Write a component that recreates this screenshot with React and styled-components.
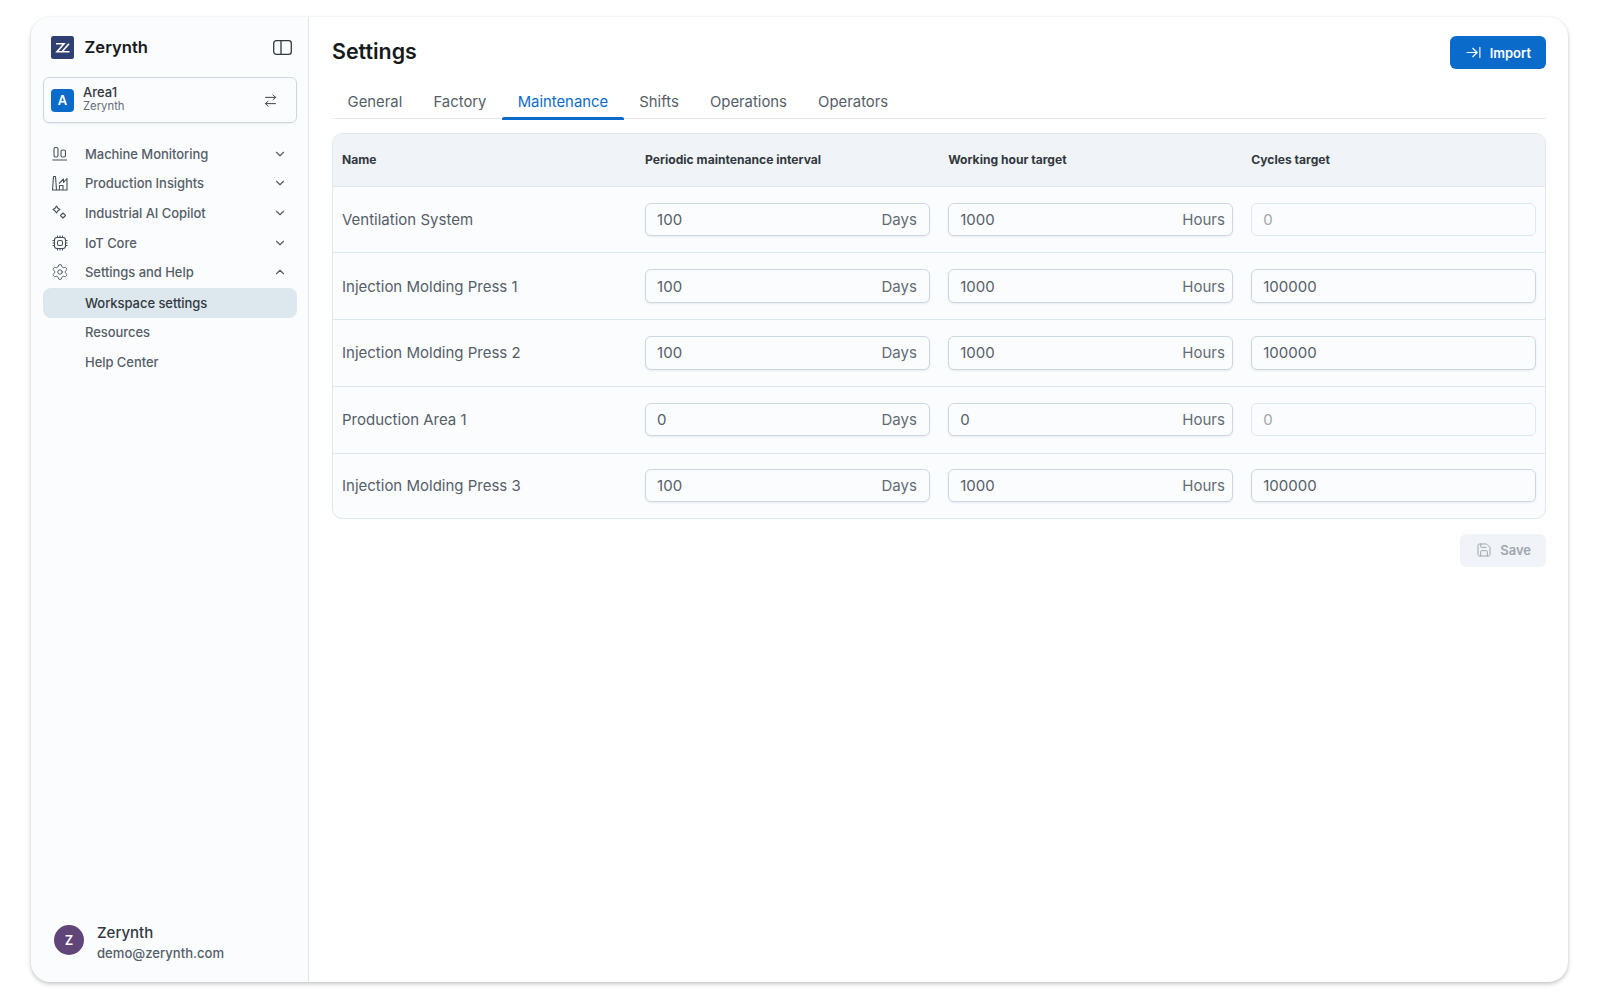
import React from 'react'
import styled, { createGlobalStyle } from 'styled-components'
import {
  ArrowRightLeft,
  ArrowRightToLine,
  ChevronDown,
  ChevronUp,
  Save,
  Settings as Gear,
} from 'lucide-react'

const GlobalStyle = createGlobalStyle`
  html, body {
    margin: 0;
    background: #fff;
    font-family: Inter, "Liberation Sans", sans-serif;
    -webkit-font-smoothing: antialiased;
  }
`

const Page = styled.div`
  box-sizing: border-box;
  width: 1600px;
  height: 1000px;
  padding: 17px 32px 17px 31px;
  overflow: hidden;
`

const Card = styled.div`
  display: flex;
  height: 965px;
  border-radius: 20px;
  background: #fff;
  box-shadow: 0 2px 4px rgba(21, 21, 21, 0.24), 0 0 2px rgba(21, 21, 21, 0.06);
  overflow: hidden;
`

const Sidebar = styled.aside`
  box-sizing: border-box;
  display: flex;
  flex-direction: column;
  flex: 0 0 278px;
  padding: 19px 11px 0 12px;
  background: #fbfcfe;
  border-right: 1px solid #dde7ee;
`

const Brand = styled.div`
  display: flex;
  align-items: center;
  height: 23px;
  margin-bottom: 18px;
  padding: 0 5px 0 8px;
  svg.panel {
    margin-left: auto;
    color: #32383e;
  }
`

const BrandName = styled.span`
  margin: -2px 0 0 10.5px;
  font-size: 16.6px;
  font-weight: 600;
  color: #171a1c;
`

const Switcher = styled.div`
  box-sizing: border-box;
  display: flex;
  align-items: center;
  height: 46px;
  padding: 0 18px 0 7px;
  border: 1px solid #cdd7e1;
  border-radius: 6px;
  background: #fbfcfe;
  box-shadow: 0 1px 2px rgba(21, 21, 21, 0.06);
  margin-bottom: 16px;
  svg {
    margin-left: auto;
    color: #32383e;
  }
`

const AreaBadge = styled.div`
  display: flex;
  align-items: center;
  justify-content: center;
  width: 23px;
  height: 23px;
  border-radius: 4px;
  background: #0b6bcb;
  color: #fff;
  font-size: 13px;
  font-weight: 600;
`

const AreaText = styled.div`
  display: flex;
  flex-direction: column;
  margin: -2px 0 0 9px;
  line-height: 14px;
`

const AreaName = styled.span`
  font-size: 13px;
  font-weight: 500;
  color: #32383e;
`

const AreaOrg = styled.span`
  font-size: 11.3px;
  color: #636b74;
`

const NavList = styled.nav`
  display: flex;
  flex-direction: column;
`

const SubList = styled.div`
  display: flex;
  flex-direction: column;
  margin-top: 1px;
`

const NavRow = styled.div`
  display: flex;
  align-items: center;
  box-sizing: border-box;
  height: 29.6px;
  padding: 0 10px;
  border-radius: 8px;
  font-size: 13px;
  letter-spacing: -0.05px;
  font-weight: 500;
  color: ${(p) => (p.$active ? '#32383e' : '#555e68')};
  background: ${(p) => (p.$active ? '#dde7ee' : 'transparent')};
`

const NavIcon = styled.span`
  display: flex;
  align-items: center;
  justify-content: center;
  flex: 0 0 16px;
  width: 16px;
  height: 16px;
  margin: 0 17px 0 -1px;
  color: #474f57;
  svg {
    flex-shrink: 0;
  }
`

const SubLabel = styled.span`
  margin-left: 32px;
`

const Chevron = styled.span`
  display: flex;
  margin-left: auto;
  color: #555e68;
`

const Account = styled.div`
  display: flex;
  align-items: center;
  margin-top: auto;
  padding: 0 0 20px 11px;
`

const Avatar = styled.div`
  display: flex;
  align-items: center;
  justify-content: center;
  width: 30px;
  height: 30px;
  border-radius: 50%;
  background: #5f4578;
  color: #fff;
  font-size: 13px;
  font-weight: 600;
`

const AccountText = styled.div`
  display: flex;
  flex-direction: column;
  gap: 2.500px;
  margin-left: 13px;
  padding-top: 6px;
`

const AccountName = styled.span`
  font-size: 15px;
  font-weight: 500;
  line-height: 18px;
  color: #32383e;
`

const AccountMail = styled.span`
  font-size: 13.1px;
  font-weight: 500;
  line-height: 18px;
  color: #555e68;
`

const Main = styled.main`
  flex: 1;
  min-width: 0;
  padding: 19px 22px 0 23px;
`

const TopBar = styled.div`
  display: flex;
  align-items: center;
  justify-content: space-between;
  height: 33px;
  margin-bottom: 14px;
`

const Title = styled.h1`
  margin: 0 0 4px;
  font-size: 21.4px;
  font-weight: 600;
  color: #171a1c;
`

const Button = styled.button`
  display: flex;
  align-items: center;
  gap: 8px;
  height: 33px;
  border: 0;
  border-radius: 6px;
  padding: 0 15px 0 ${(p) => (p.disabled ? '16px' : '15px')};
  font-family: inherit;
  font-size: 13px;
  font-weight: 600;
  color: ${(p) => (p.disabled ? '#9fa6ad' : '#fff')};
  background: ${(p) => (p.disabled ? '#f0f4f8' : '#0b6bcb')};
`

const Tabs = styled.div`
  display: flex;
  height: 35px;
  border-bottom: 1.5px solid #e4e9ee;
  margin-bottom: 14px;
`

const Tab = styled.div`
  position: relative;
  display: flex;
  align-items: center;
  padding: 2px 15.6px 0;
  font-size: 14.85px;
  color: ${(p) => (p.$active ? '#0b6bcb' : '#555e68')};
  &::after {
    content: '';
    display: ${(p) => (p.$active ? 'block' : 'none')};
    position: absolute;
    left: 0;
    right: 0;
    bottom: -1.5px;
    height: 2.5px;
    border-radius: 2px 2px 0 0;
    background: #0b6bcb;
  }
`

const Table = styled.div`
  border: 1px solid #dde7ee;
  border-radius: 10px;
  background: #fbfcfe;
  overflow: hidden;
`

const Row = styled.div`
  display: grid;
  grid-template-columns: repeat(4, 1fr);
  column-gap: 18.3px;
  align-items: center;
  padding: 0 9px;
  height: 65.75px;
  border-bottom: 1px solid #dde7ee;
  &:last-child {
    height: 64px;
    border-bottom: 0;
  }
`

const HeadRow = styled(Row)`
  height: 51.5px;
  background: #f0f4f8;
`

const HeadCell = styled.div`
  font-size: 12.1px;
  font-weight: 700;
  color: #32383e;
`

const NameCell = styled.div`
  font-size: 15px;
  color: #555e68;
`

const Field = styled.div`
  box-sizing: border-box;
  display: flex;
  align-items: center;
  justify-content: space-between;
  height: 33.5px;
  padding: 0 ${(p) => (p.$tight ? '7px' : '12px')} 0 11px;
  border: 1px solid ${(p) => (p.$disabled ? '#dde7ee' : '#cdd7e1')};
  border-radius: 6px;
  background: #fbfcfe;
  box-shadow: ${(p) => (p.$disabled ? 'none' : '0 1px 2px rgba(21, 21, 21, 0.08)')};
  font-size: 15px;
  color: ${(p) => (p.$disabled ? '#9fa6ad' : '#555e68')};
`

const Unit = styled.span`
  color: #636b74;
`

const Actions = styled.div`
  display: flex;
  justify-content: flex-end;
  margin-top: 15px;
`

const PanelIcon = () => (
  <svg className="panel" width="19" height="15" viewBox="0 0 19 15" fill="none" stroke="currentColor" strokeWidth="1.3">
    <rect x="0.7" y="0.7" width="17.6" height="13.6" rx="2.600" />
    <path d="M8 0.7v13.6" />
  </svg>
)

const MachineIcon = () => (
  <svg width="16" height="16" viewBox="0 0 16 16" fill="none" stroke="currentColor" strokeWidth="1.1">
    <rect x="2" y="1.5" width="4" height="9.5" rx="1.6" />
    <rect x="9" y="4" width="4.500" height="7" rx="1.6" />
    <path d="M0.5 14h14.500" />
  </svg>
)

const FactoryIcon = () => (
  <svg width="18" height="16" viewBox="0 0 18 16" fill="none" stroke="currentColor" strokeWidth="1.1" strokeLinejoin="round">
    <path d="M1.500 15 2.500 1.500h2L5.500 15z" />
    <path d="M5.500 15h10.500V3.500l-3.500 4V4L8 8.500" />
    <path d="M8.500 15v-4.500h3.500V15" />
  </svg>
)

const SparkIcon = () => (
  <svg width="16" height="16" viewBox="0 0 16 16" fill="none" stroke="currentColor" strokeWidth="1.1" strokeLinejoin="round">
    <path d="M4.500 1Q5.500 3.500 8 4.500 5.500 5.500 4.500 8 3.500 5.500 1 4.500 3.500 3.500 4.500 1z" />
    <path d="M11 8 13.500 10.500 11 13 8.500 10.500z" />
  </svg>
)

const ChipIcon = () => (
  <svg width="16" height="16" viewBox="0 0 16 16" fill="none" stroke="currentColor" strokeWidth="1.1">
    <rect x="2.500" y="2.500" width="11" height="11" rx="2.500" />
    <rect x="5.500" y="5.500" width="5" height="5" rx="1.800" />
    <path d="M5.500 0.500v2M8 0.500v2M10.500 0.500v2M5.500 13.500v2M8 13.500v2M10.500 13.500v2M0.500 5.500h2M0.500 8h2M0.500 10.500h2M13.500 5.500h2M13.500 8h2M13.500 10.500h2" />
  </svg>
)

const BrandLogo = () => (
  <svg width="23" height="23" viewBox="0 0 23 23">
    <rect width="23" height="23" rx="2.500" fill="#2f3f73" />
    <path d="M5 7.700h8L6 15.700h4.500M18 7.700l-7 8h7.500" fill="none" stroke="#fff" strokeWidth="1.600" />
  </svg>
)

const navItems = [
  { label: 'Machine Monitoring', icon: <MachineIcon /> },
  { label: 'Production Insights', icon: <FactoryIcon /> },
  { label: 'Industrial AI Copilot', icon: <SparkIcon /> },
  { label: 'IoT Core', icon: <ChipIcon /> },
  { label: 'Settings and Help', icon: <Gear size={18} strokeWidth={1.2} />, open: true },
]

const subItems = [
  { label: 'Workspace settings', active: true },
  { label: 'Resources' },
  { label: 'Help Center' },
]

const tabs = ['General', 'Factory', 'Maintenance', 'Shifts', 'Operations', 'Operators']

const rows = [
  { name: 'Ventilation System', interval: '100', hours: '1000', cycles: '0', noCycles: true },
  { name: 'Injection Molding Press 1', interval: '100', hours: '1000', cycles: '100000' },
  { name: 'Injection Molding Press 2', interval: '100', hours: '1000', cycles: '100000' },
  { name: 'Production Area 1', interval: '0', hours: '0', cycles: '0', noCycles: true },
  { name: 'Injection Molding Press 3', interval: '100', hours: '1000', cycles: '100000' },
]

const App = () => (
  <Page>
    <GlobalStyle />
    <Card>
      <Sidebar>
        <Brand>
          <BrandLogo />
          <BrandName>Zerynth</BrandName>
          <PanelIcon />
        </Brand>
        <Switcher>
          <AreaBadge>A</AreaBadge>
          <AreaText>
            <AreaName>Area1</AreaName>
            <AreaOrg>Zerynth</AreaOrg>
          </AreaText>
          <ArrowRightLeft size={15} strokeWidth={1.5} />
        </Switcher>
        <NavList>
          {navItems.map((item) => (
            <NavRow key={item.label}>
              <NavIcon>{item.icon}</NavIcon>
              {item.label}
              <Chevron>
                {item.open ? <ChevronUp size={14} /> : <ChevronDown size={14} />}
              </Chevron>
            </NavRow>
          ))}
          <SubList>
            {subItems.map((item) => (
              <NavRow key={item.label} $active={item.active}>
                <SubLabel>{item.label}</SubLabel>
              </NavRow>
            ))}
          </SubList>
        </NavList>
        <Account>
          <Avatar>Z</Avatar>
          <AccountText>
            <AccountName>Zerynth</AccountName>
            <AccountMail>demo@zerynth.com</AccountMail>
          </AccountText>
        </Account>
      </Sidebar>
      <Main>
        <TopBar>
          <Title>Settings</Title>
          <Button>
            <ArrowRightToLine size={17} strokeWidth={1.6} />
            Import
          </Button>
        </TopBar>
        <Tabs>
          {tabs.map((t) => (
            <Tab key={t} $active={t === 'Maintenance'}>{t}</Tab>
          ))}
        </Tabs>
        <Table>
          <HeadRow>
            <HeadCell>Name</HeadCell>
            <HeadCell>Periodic maintenance interval</HeadCell>
            <HeadCell>Working hour target</HeadCell>
            <HeadCell>Cycles target</HeadCell>
          </HeadRow>
          {rows.map((r) => (
            <Row key={r.name}>
              <NameCell>{r.name}</NameCell>
              <Field>
                {r.interval}
                <Unit>Days</Unit>
              </Field>
              <Field $tight>
                {r.hours}
                <Unit>Hours</Unit>
              </Field>
              <Field $disabled={r.noCycles}>{r.cycles}</Field>
            </Row>
          ))}
        </Table>
        <Actions>
          <Button disabled>
            <Save size={16} strokeWidth={1.5} />
            Save
          </Button>
        </Actions>
      </Main>
    </Card>
  </Page>
)

export default App
